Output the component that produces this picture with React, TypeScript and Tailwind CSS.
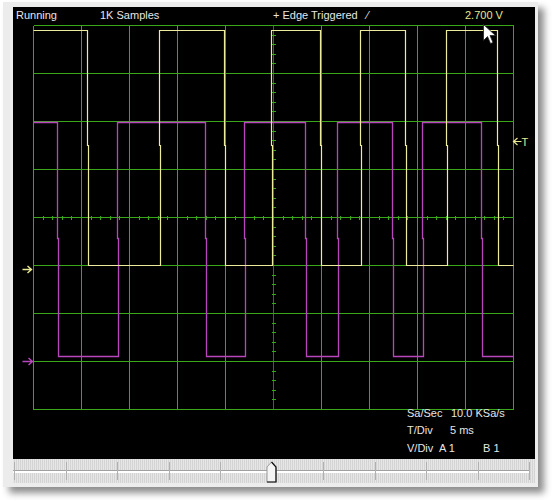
import React from 'react';

const font = { fontFamily: '"Liberation Sans", Arial, sans-serif' };

const vLines = Array.from({ length: 11 }, (_, i) => 33 + 48 * i);
const hLines = Array.from({ length: 9 }, (_, i) => 25 + 48 * i);
const hTicks = Array.from({ length: 51 }, (_, i) => 33 + 9.6 * i);
const vTicks = Array.from({ length: 41 }, (_, i) => 25 + 9.6 * i);
const sliderTicks = Array.from({ length: 11 }, (_, i) => 1 + 51.5 * i);

const yellow =
  'M33,30 H87 V145 h1 V265 H160 V145 h-1 V30 H224 V145 h1 V265 H272 V145 h-1 V30 H320 V145 h1 V265 H361 V145 h-1 V30 H405 V145 h1 V265 H447 V145 h-1 V30 H497 V145 h1 V265 H513';
const purple =
  'M33,122 H57 V238 h1 V356 H118 V238 h-1 V122 H205 V238 h1 V356 H245 V238 h-1 V122 H305 V238 h1 V356 H338 V238 h-1 V122 H392 V238 h1 V356 H423 V238 h-1 V122 H481 V238 h1 V356 H513';

const grid = '#38a818';

const ScopeTraces = () => (
  <svg className="absolute inset-0" width="522" height="452" viewBox="0 0 522 452">
    <g transform="translate(-12.5,-6.5)" shapeRendering="crispEdges">
      {vLines.map((x) => (
        <line key={'v' + x} x1={x} y1={25} x2={x} y2={409} stroke={x === 273 ? '#2c50d8' : grid} strokeWidth="1" />
      ))}
      {hLines.map((y) => (
        <line key={'h' + y} x1={33} y1={y} x2={513} y2={y} stroke={grid} strokeWidth="1" />
      ))}
      {hTicks.map((x) => (
        <line key={'ht' + x} x1={Math.round(x)} y1={215} x2={Math.round(x)} y2={219} stroke={grid} strokeWidth="1" />
      ))}
      {vTicks.map((y) => (
        <line key={'vt' + y} x1={271} y1={Math.round(y)} x2={275} y2={Math.round(y)} stroke={grid} strokeWidth="1" />
      ))}
    </g>
    <g transform="translate(-12.5,-6.5)">
      <path d={purple} fill="none" stroke="#b846bc" strokeWidth="1.3" />
      <path d={yellow} fill="none" stroke="#ecec9c" strokeWidth="1.2" />

      {/* channel markers */}
      <path d="M22,269 H31 M27,265.5 L31,269 L27,272.5" fill="none" stroke="#e8e890" strokeWidth="1.4" />
      <path d="M22,361 H32 M28,357.5 L32,361 L28,364.5" fill="none" stroke="#b846bc" strokeWidth="1.4" />
      <path d="M513,141 H521 M517,137.5 L513,141 L517,144.5" fill="none" stroke="#e8e890" strokeWidth="1.2" />
      <text x="521" y="145.5" fill="#e8e890" fontSize="11" style={font}>T</text>

      {/* mouse pointer */}
      <path d="M483,24 L483,40 L487,36 L490,43 L492.5,42 L489.5,35 L495,35 Z" fill="#ffffff" stroke="#222" strokeWidth="0.8" />
    </g>
  </svg>
);

const Slider = () => (
  <div className="relative h-[24px] bg-[repeating-linear-gradient(90deg,#e6e6e6_0px,#e6e6e6_1px,#d4d4d4_1px,#d4d4d4_2px)]">
    <div className="absolute left-0 right-[6px] top-[11px] h-[3px] border-t border-[#a0a0a0] bg-white" />
    {sliderTicks.map((x) => (
      <div key={x} className="absolute top-[3px] h-[18px] w-px bg-[#b0b0b0]" style={{ left: x }} />
    ))}
    <svg className="absolute left-[253px] top-[2px]" width="12" height="22" viewBox="0 0 12 22">
      <path d="M1,21 V6 L5.5,1 L10,6 V21 Z" fill="#f4f4f4" stroke="#9a9a9a" strokeWidth="1" />
      <path d="M5.5,1 L10,6 V21 H1" fill="none" stroke="#111" strokeWidth="1.2" />
    </svg>
  </div>
);

export default function App() {
  return (
    <div className="min-h-screen bg-white pt-[2px] pl-[3px]" style={font}>
      <div className="w-[535px] bg-[#ececec] pl-[10px] pr-[3px] pt-[5px] pb-[4px] shadow-[6px_6px_7px_rgba(0,0,0,0.45)]">
        <div className="relative flex h-[452px] flex-col justify-between bg-black text-[11px] text-[#e6e6e6]">
          <ScopeTraces />
          <div className="relative flex h-[16px] items-center pl-[3px] pt-[1px] leading-[13px]">
            <span className="w-[84px]">Running</span>
            <span className="w-[173px]">1K Samples</span>
            <span className="w-[192px]">+ Edge Triggered &nbsp; ⁄</span>
            <span className="text-[#e8e890]">2.700 V</span>
          </div>
          <div className="relative ml-[394px] flex flex-col pb-[2px] leading-[17.5px]">
            <div className="flex">
              <span className="w-[44px]">Sa/Sec</span>
              <span>10.0 KSa/s</span>
            </div>
            <div className="flex">
              <span className="w-[43px]">T/Div</span>
              <span>5 ms</span>
            </div>
            <div className="flex">
              <span className="w-[32px]">V/Div</span>
              <span className="w-[44px]">A 1</span>
              <span>B 1</span>
            </div>
          </div>
        </div>
        <Slider />
      </div>
    </div>
  );
}
